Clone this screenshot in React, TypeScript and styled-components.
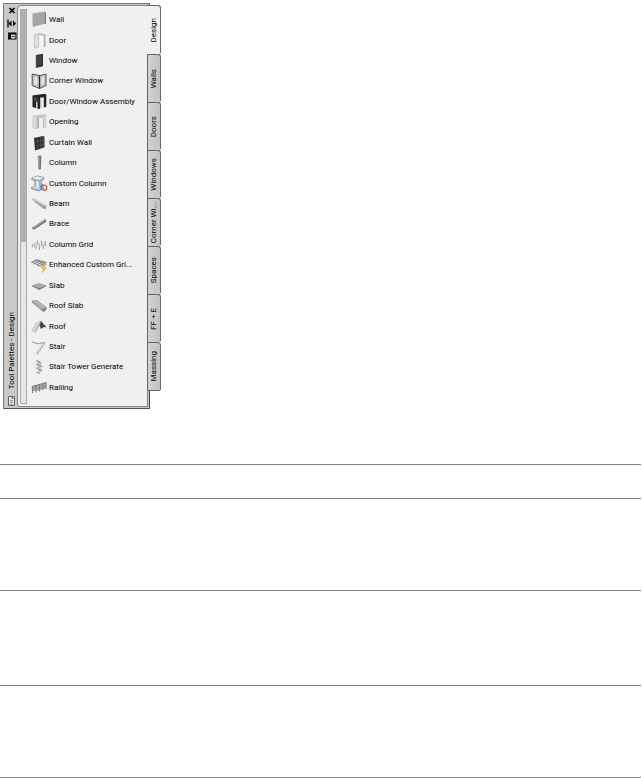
import React, { useState } from "react";
import styled, { createGlobalStyle } from "styled-components";

const GlobalStyle = createGlobalStyle`
  * { box-sizing: border-box; }
  body { margin: 0; background: #fff; }
  button { font: inherit; color: inherit; }
`;

const Page = styled.main`
  display: flex;
  flex-direction: column;
  min-height: 100vh;
  font-family: Roboto, "Noto Sans", sans-serif;
  font-size: 8px;
  line-height: 12px;
  color: #000;
`;

const Palette = styled.section`
  display: flex;
  align-items: flex-start;
  align-self: flex-start;
  padding: 3px 3px 0;
  min-height: 409px;
`;

const Frame = styled.div`
  display: flex;
  align-self: stretch;
  width: 147px;
  padding: 1px 1px 1px 0;
  background: #c9c9c9;
  border: 1px solid #777;
  border-right-color: #444;
  border-bottom-color: #555;
  border-radius: 1px;
`;

const TitleBar = styled.header`
  display: flex;
  flex-direction: column;
  align-items: center;
  gap: 4px;
  width: 13px;
  padding: 1px 0 0 2px;
`;

const BarButton = styled.button`
  display: flex;
  padding: 0;
  border: 0;
  background: none;
`;

const Title = styled.h1`
  margin: auto 0 2px;
  font-size: 8px;
  font-weight: 400;
  line-height: 12px;
  writing-mode: vertical-rl;
  transform: rotate(180deg);
  white-space: nowrap;
`;

const Panel = styled.div`
  display: flex;
  flex: 1;
  min-width: 0;
  padding: 3px 0 2px 2px;
  background: #f0f0f0;
  border: 1px solid #858585;
  border-radius: 4px 0 0 2px;
`;

const Track = styled.div`
  width: 7px;
  background: #e6e6e6;
  border: 1px solid #ababab;
`;

const Thumb = styled.div`
  height: 59%;
  background: #b0b0b0;
`;

const ToolList = styled.ul`
  display: flex;
  flex: 1;
  flex-direction: column;
  min-width: 0;
  margin: 0;
  padding: 1px 0 6px 4px;
  list-style: none;
`;

const ToolItem = styled.li`
  display: flex;
  flex: 1;
`;

const ToolButton = styled.button`
  display: flex;
  flex: 1;
  align-items: center;
  min-width: 0;
  padding: 0;
  border: 0;
  background: none;
  text-align: left;
  white-space: nowrap;
`;

const ToolIcon = styled.svg`
  flex: none;
  width: 18px;
  height: 18px;
`;

const Tabs = styled.nav`
  display: flex;
  flex-direction: column;
  width: 14px;
  margin: 2px 0 0 -3px;
`;

const Tab = styled.button<{ $active: boolean }>`
  display: flex;
  align-items: center;
  justify-content: center;
  height: ${(p) => (p.$active ? 49 : 48)}px;
  padding: 0;
  background: ${(p) => (p.$active ? "#f0f0f0" : "linear-gradient(90deg, #d2d2d2, #c2c2c2)")};
  border: solid #666;
  border-width: ${(p) => (p.$active ? "1px 1px 0 0" : "1px 1px 0 1px")};
  border-radius: 0 3px 2px 0;

  &:last-child { border-bottom-width: 1px; height: 49px; }
`;

const TabText = styled.span`
  writing-mode: vertical-rl;
  transform: rotate(180deg);
  white-space: nowrap;
`;

const Sheet = styled.section`
  display: flex;
  flex-direction: column;
  padding: 55px 1px 0 0;
`;

const Band = styled.div<{ $height: number }>`
  height: ${(p) => p.$height}px;
  border-top: 1px solid #808080;
`;

const icons: Record<string, React.ReactNode> = {
  Wall: (
    <>
      <path d="M1.5 2.5 13.5 .8v12L1.5 16Z" fill="#a5a5a5" />
      <path d="m13.5.8 1.5.7v11.8l-1.5-.5Z" fill="#777" />
      <path d="M1.5 2.5 13.5.8l1.5.7" fill="none" stroke="#c2c2c2" strokeWidth=".7" />
    </>
  ),
  Door: (
    <>
      <path d="m5 2 3-1 6.5 1.6v12L12.5 15V4L8 2.5Z" fill="#b4b4b4" />
      <path d="m8 3 4.5 1v9.5L8 12.5Z" fill="#f8f8f8" />
      <path d="m3.5 2.2 4.3 1v12L3.5 16Z" fill="#dedede" stroke="#b4b4b4" strokeWidth=".6" />
    </>
  ),
  Window: (
    <>
      <path d="m5 3 7-1.2v12.4L5 16Z" fill="#303030" />
      <path d="m6.5 4.5 4-.7v9l-4 1Z" fill="#444" />
      <path d="M5 3v13" stroke="#888" strokeWidth=".7" />
    </>
  ),
  "Corner Window": (
    <>
      <path d="m1.2 2 7.3 1.6L15 2v11.5l-6.5 3-7.3-3Z" fill="#c4c4c4" stroke="#555" />
      <path d="m2.8 3.8 3.8.8v9.2l-3.8-1.5Zm10.8 0-3.5.8v9.2l3.5-1.5Z" fill="#e6e6e6" stroke="#999" strokeWidth=".4" />
      <path d="M8.5 3.6v13" stroke="#222" strokeWidth="1.2" />
    </>
  ),
  "Door/Window Assembly": (
    <>
      <path d="M1.5 2.5 14 .8l1.3 1v12l-2.5.8V4.2l-3.8.5v11L6.5 16V9L5 9.3V15l-3.5-1Z" fill="#222" />
      <path d="M6 5.3v10" stroke="#888" strokeWidth=".7" />
      <path d="m2.8 4.3 2.3-.4v4.2l-2.3.3Z" fill="#484848" />
      <path d="m9 5 1.3.8V14L9 15.5Z" fill="#b8b8b8" />
    </>
  ),
  Opening: (
    <>
      <path d="m1.5 2.6 12.5-1.4 1.2.8v12.2l-3.4.8V4.8L8 5.2v10l-2.5.8-4-1Z" fill="#c5c5c5" />
      <path d="m2 3 3.5.8v11.6l-3.5-1Z" fill="#dadada" />
      <path d="m6.5 5 1.5.6v9l-1.5.7Z" fill="#aaa" />
      <path d="M13.8 2.5v11.8" stroke="#e2e2e2" />
    </>
  ),
  "Curtain Wall": (
    <>
      <path d="m3 4 9-2 1.5.8v10.5l-2 .7L4 16.5Z" fill="#2d2d2d" />
      <path d="m6.3 3.2.4 12.3M9.5 2.5v12.2M3.8 8l9.5-2M4 12l9.5-2" stroke="#666" strokeWidth=".5" fill="none" />
      <path d="M12.2 2v11.5" stroke="#666" strokeWidth=".7" />
    </>
  ),
  Column: (
    <>
      <path d="m6.8 2 2.2-.5 1.4.6-.5 12.9-1.2.8-1.5-.7Z" fill="#777" />
      <path d="m6.8 2 1.7.5v13l-1.3-.5Z" fill="#a2a2a2" />
    </>
  ),
  "Custom Column": (
    <>
      <path d="M.8 3 6.2.8 13 2.4v1.8L10.5 6v5.3l2 .8v1.5L7.8 16 .5 14v-1.8l3.3-1V6L.8 4.6Z" fill="#a8b0b8" stroke="#7b848c" strokeWidth=".6" />
      <path d="m1 3 5.3-1.8L12.5 3 8 4.7Zm4.2 3 2.5.7v5.7l-2.5-1Z" fill="#e8edf1" />
      <path d="m1 12.3 4-1 3 1.7 3.6-.8-4 2Z" fill="#d9e0e5" />
      <path d="M12.5 10.2a2.4 2.4 0 1 0 0 4.8" fill="none" stroke="#3b83c7" strokeWidth="1.5" />
      <path d="M13.3 10.2a2.5 2.5 0 0 1 0 5" fill="none" stroke="#e46b32" strokeWidth="1.5" />
      <path d="m11.3 8.8 2.1 1.3-1.7 1.8Z" fill="#3b83c7" />
      <path d="m14.6 16.7-2.3-1.3 1.7-1.8Z" fill="#e46b32" />
    </>
  ),
  Beam: (
    <>
      <path d="m.8 4.5 1.7-1.3 12.8 7.6-.3 3.5-3-.8Z" fill="#a9a9a9" />
      <path d="m2.5 3.2 12.8 7.3-1 1L1.5 5Z" fill="#c8c8c8" />
      <path d="m4 6.8 9.8 5.8M12 13.5l3.2-3" stroke="#888" strokeWidth=".7" fill="none" />
    </>
  ),
  Brace: (
    <>
      <path d="m1.5 12.6 12.5-8.3 1.3.8-.3 1.6L3 14.5l-1.5-.6Z" fill="#606060" />
      <path d="m1.5 12.4 12.3-8.2 1.2.8L3 13.3Z" fill="#aaa" />
      <path d="m1.2 12.2 1.9 1" stroke="#888" />
    </>
  ),
  "Column Grid": (
    <>
      <path d="M1.5 8v3M4 6.5v5M6.5 4v5M8.5 8v6M10.5 4.5v5M12.3 8v5M14.3 5v5M5.3 10v3" fill="none" stroke="#8c8c8c" strokeWidth=".8" />
      <path d="m.5 9 4 .5 2-5 2 5 2 2 2-5 1.5 4 1-1" fill="none" stroke="#c4c4c4" strokeWidth=".6" />
    </>
  ),
  "Enhanced Custom Grid": (
    <>
      <path d="m.5 6.2 5.2-2.5 9.8 2.8-4.8 4ZM2.8 5.2l9.7 3.7M5 4.2l9.2 3.3M3.5 7.8l5-3.3M6 9l5.5-3.7M8.5 10l5-4" fill="none" stroke="#707070" strokeWidth=".8" />
      <path d="M3 7v2m4-.5V11M13.5 7v2" stroke="#999" strokeWidth=".6" />
      <path d="m13.8 8.5-3.4 4.2h2.3l-1.5 4.2 4.2-5h-2.2l2.1-3.4Z" fill="#f5c63f" stroke="#cf9a22" strokeWidth=".4" />
    </>
  ),
  Slab: (
    <>
      <path d="M1 8.3 8 6l7.3 2.2-7 3.7Z" fill="#aaa" />
      <path d="m1 8.3 7.3 3 7-3.1v1.1l-7 3.7L1 9.2Z" fill="#808080" />
    </>
  ),
  "Roof Slab": (
    <>
      <path d="m.8 3.8 4.7-.8 9.8 7v3l-3 2L1 5.5Z" fill="#8e8e8e" />
      <path d="m.8 3.8 4.7-.8 9.5 6.8-3.8 2.8Z" fill="#b2b2b2" />
      <path d="m11.2 12.2.8 2.3 3.3-1.8V9.8Z" fill="#858585" />
    </>
  ),
  Roof: (
    <>
      <path d="M5.5 4.5 10.3 3 5 11.5l-.5 3L.8 12.8Z" fill="#d2d2d2" stroke="#b5b5b5" strokeWidth=".5" />
      <path d="m10.2 3 5.4 6.5-2.6-.5-3.2 2-1.4-4Z" fill="#454545" />
      <path d="m10.2 3-2 4.2-3.5 6.5" fill="none" stroke="#888" strokeWidth=".7" />
    </>
  ),
  Stair: (
    <>
      <path d="m1 4 6 1.8 7.2-1.3M13.7 4.5l-.3 2-1.8 1-.2 2-1.8 1-.2 2-1.8 1-.2 2-2 .5" fill="none" stroke="#b4b4b4" strokeWidth="1.1" />
      <path d="m12.5 5.5-7 9.5" stroke="#ccc" strokeWidth="1.5" />
      <path d="m1.2 4 6 1.8 6.8-1.3" fill="none" stroke="#909090" strokeWidth=".6" />
    </>
  ),
  "Stair Tower Generate": (
    <>
      <path d="m5.5 2.5 3.8 2-3.2 1.8 4.2 2-4.1 2 4.1 2-3.8 2.3 2.4 1" fill="none" stroke="#b8b8b8" strokeWidth="1.7" />
      <path d="m5.5 2.8 4 1.8m-3.4 2 4.2 2m-4.1 2 4.1 2" fill="none" stroke="#888" strokeWidth=".8" />
      <path d="M9.5 4v3M6.2 7v3.3m4-1v3.3" stroke="#aaa" strokeWidth=".6" />
    </>
  ),
  Railing: (
    <>
      <path d="m.8 7.5 14.5-4v5.8l-10.8 3-3.7-.5Z" fill="#a4a4a4" />
      <path d="m.8 7.5 14.5-4M1.5 7v7M5 6v7.5M8.5 5v7.5M12 4v7M15 3.5V10" fill="none" stroke="#777" strokeWidth=".9" />
    </>
  ),
};

const tools = Object.keys(icons);
const tabNames = ["Design", "Walls", "Doors", "Windows", "Corner Wi...", "Spaces", "FF + E", "Massing"];
const bands = [34, 92, 95, 92, 1];

export default function App() {
  const [active, setActive] = useState("Design");
  return (
    <Page>
      <GlobalStyle />
      <Palette aria-label="Tool Palettes">
        <Frame>
          <TitleBar>
            <BarButton aria-label="Close">
              <svg width="10" height="9" viewBox="0 0 10 9">
                <path d="m2.5 2 5 5m0-5-5 5" stroke="#000" strokeWidth="1.7" />
              </svg>
            </BarButton>
            <BarButton aria-label="Auto-hide">
              <svg width="10" height="9" viewBox="0 0 10 9">
                <path d="M1 .5v8" stroke="#000" strokeWidth="1.3" />
                <path d="m1.5 4.5 3-3v6ZM9 4.5l-3-3v6Z" fill="#000" />
              </svg>
            </BarButton>
            <BarButton aria-label="Properties">
              <svg width="10" height="8" viewBox="0 0 10 8">
                <path d="M1 .5h8.5v7H1Z" fill="#000" />
                <path d="M4 2.5h4.5v4H4Z" fill="#ddd" />
                <path d="M4.5 4.5h4M1.5 3h1.3M1.5 5h1.3" stroke="#444" />
              </svg>
            </BarButton>
            <Title>Tool Palettes - Design</Title>
            <svg width="10" height="12" viewBox="0 0 10 12" aria-hidden="true">
              <path d="M1.5 1.5h6v9h-6Z" fill="#e8e8e8" stroke="#666" />
              <path d="m4.5 1 3 3h-3Z" fill="#777" />
              <path d="M2.5 5.5h4M2.5 7.5h4M2.5 9.5h4M4.5 5v5" stroke="#999" strokeWidth=".7" />
            </svg>
          </TitleBar>
          <Panel>
            <Track>
              <Thumb />
            </Track>
            <ToolList>
              {tools.map((name) => (
                <ToolItem key={name}>
                  <ToolButton>
                    <ToolIcon viewBox="0 0 18 18" aria-hidden="true">{icons[name]}</ToolIcon>
                    {name === "Enhanced Custom Grid" ? "Enhanced Custom Gri..." : name}
                  </ToolButton>
                </ToolItem>
              ))}
            </ToolList>
          </Panel>
        </Frame>
        <Tabs aria-label="Palettes">
          {tabNames.map((name) => (
            <Tab key={name} $active={name === active} onClick={() => setActive(name)}>
              <TabText>{name}</TabText>
            </Tab>
          ))}
        </Tabs>
      </Palette>
      <Sheet>
        {bands.map((height, i) => (
          <Band key={i} $height={height} />
        ))}
      </Sheet>
    </Page>
  );
}
